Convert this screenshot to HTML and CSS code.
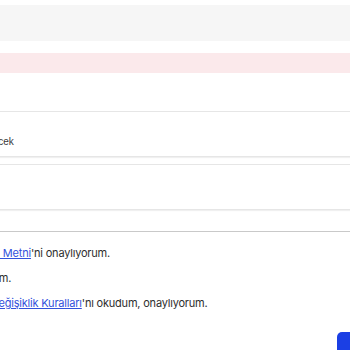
FILE: index.html
```html
<!DOCTYPE html>
<html lang="tr">
<head>
<meta charset="utf-8">
<link rel="stylesheet" href="styles.css">
</head>
<body>
<div class="page">
  <div class="shift">
    <div class="notice"></div>
    <div class="alert"></div>
    <div class="fields">
      <div class="field"><span class="value">Seçilecek</span></div>
      <div class="field"></div>
    </div>
    <hr class="divider">
    <ul class="consents">
      <li class="consent"><span class="box"></span><span class="label"><a href="#">Aydınlatma Metni</a>'ni onaylıyorum.</span></li>
      <li class="consent"><span class="box"></span><span class="label">Onaylıyorum.</span></li>
      <li class="consent"><span class="box"></span><span class="label"><a href="#">Bagaj ve Değişiklik Kuralları</a>'nı okudum, onaylıyorum.</span></li>
    </ul>
    <div class="actions"><button class="submit" type="button">Devam Et</button></div>
  </div>
</div>
</body>
</html>
```
FILE: styles.css
```css
html, body {
  margin: 0;
  padding: 0;
  background: #ffffff;
  overflow: hidden;
  width: 350px;
  height: 350px;
}
.page {
  width: 350px;
  height: 350px;
  overflow: hidden;
  font-family: Inter, "Noto Sans", sans-serif;
}
.shift {
  margin-left: -119px;
  width: 560px;
  padding-top: 5px;
}
.notice {
  height: 36px;
  background: #f6f6f6;
}
.alert {
  margin-top: 12px;
  height: 20px;
  background: #fbe9eb;
}
.fields {
  margin-top: 38px;
  display: flex;
  flex-direction: column;
  gap: 7px;
}
.field {
  border: 1px solid #e6e6e6;
  box-shadow: 0 1px 1px #f0f0f0;
  display: flex;
  align-items: center;
  padding: 4px 0 0 89px;
  box-sizing: border-box;
  height: 46px;
}
.value {
  font-family: "Liberation Sans", Arial, sans-serif;
  font-size: 10px;
  color: #3a3a3a;
  padding-top: 10px;
}
.divider {
  margin: 21px 0 0;
  border: 0;
  border-top: 1px solid #c9c9c9;
  height: 0;
}
.consents {
  list-style: none;
  margin: 13px 0 0;
  padding: 0 0 0 42px;
  display: flex;
  flex-direction: column;
  gap: 9px;
}
.consent {
  display: flex;
  align-items: center;
  gap: 8px;
  font-size: 11px;
  letter-spacing: -0.2px;
  line-height: 16px;
  color: #2e2e2e;
}
.box {
  width: 14px;
  height: 14px;
  border: 1px solid #bbb;
  border-radius: 3px;
  box-sizing: border-box;
  flex: none;
}
.label a {
  color: #3352dc;
  text-decoration: underline;
}
.actions {
  display: flex;
  margin-top: 21px;
  padding-left: 456px;
}
.submit {
  background: #1b3fe4;
  color: #fff;
  border: 0;
  border-radius: 5px;
  height: 40px;
  width: 200px;
  font-family: Inter, sans-serif;
  font-size: 13px;
}
```
